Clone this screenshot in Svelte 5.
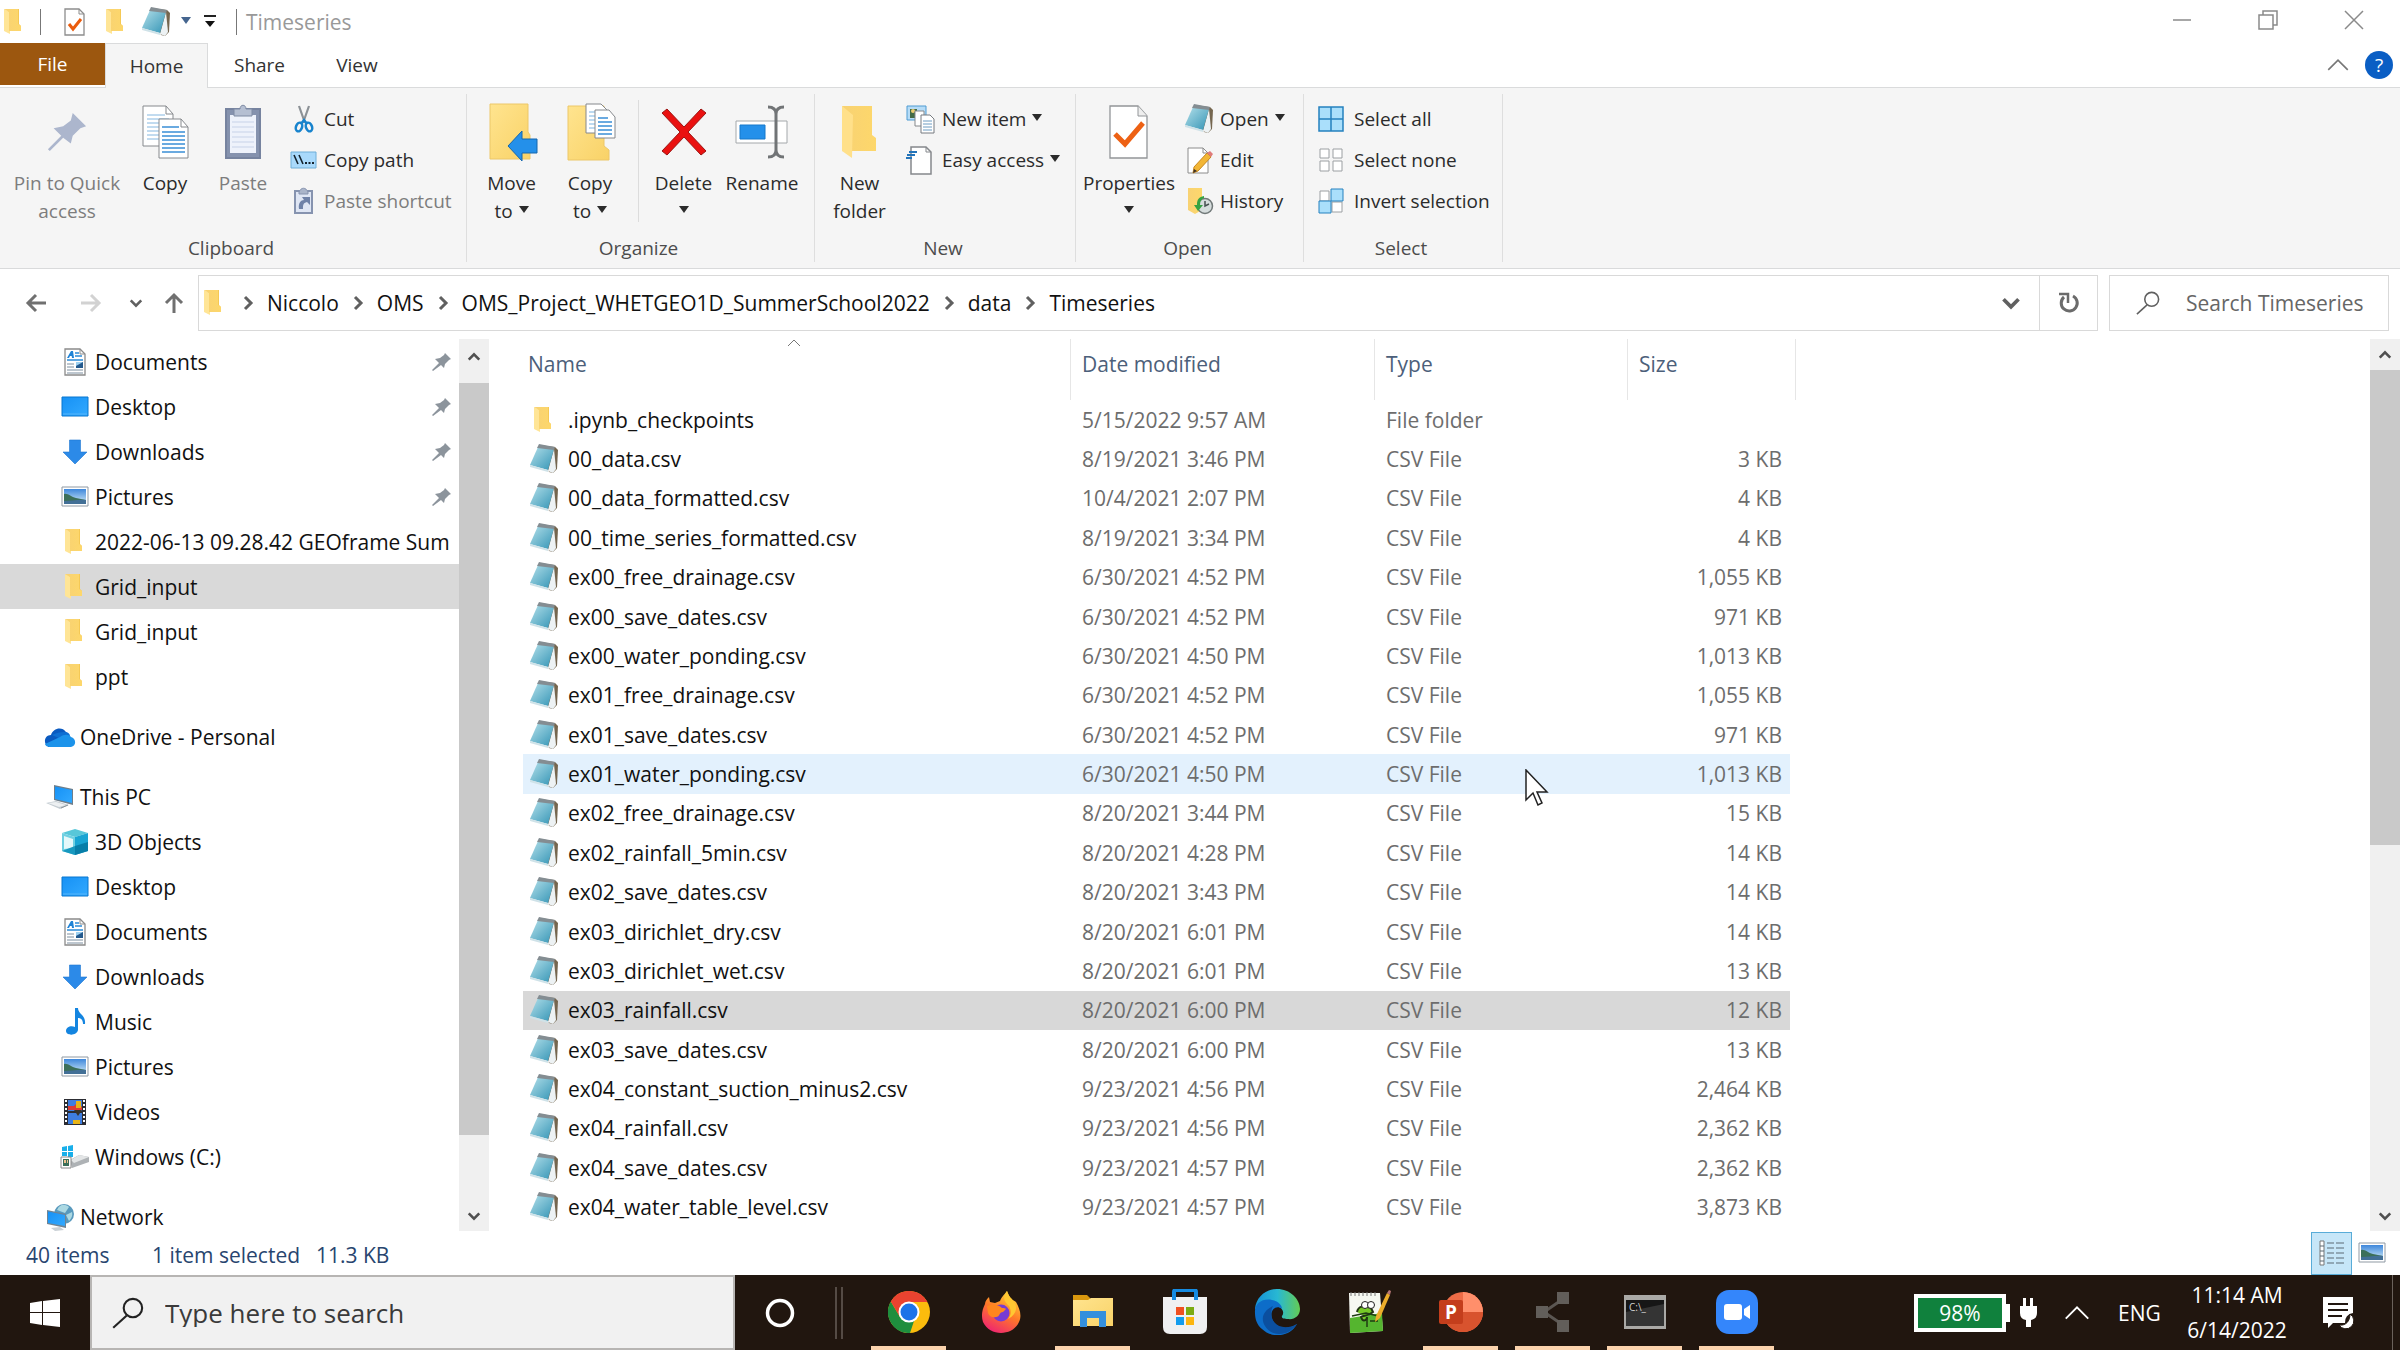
<script>
  const files = [
    ['.ipynb_checkpoints', '5/15/2022 9:57 AM', 'File folder', ''],
    ['00_data.csv', '8/19/2021 3:46 PM', 'CSV File', '3 KB'],
    ['00_data_formatted.csv', '10/4/2021 2:07 PM', 'CSV File', '4 KB'],
    ['00_time_series_formatted.csv', '8/19/2021 3:34 PM', 'CSV File', '4 KB'],
    ['ex00_free_drainage.csv', '6/30/2021 4:52 PM', 'CSV File', '1,055 KB'],
    ['ex00_save_dates.csv', '6/30/2021 4:52 PM', 'CSV File', '971 KB'],
    ['ex00_water_ponding.csv', '6/30/2021 4:50 PM', 'CSV File', '1,013 KB'],
    ['ex01_free_drainage.csv', '6/30/2021 4:52 PM', 'CSV File', '1,055 KB'],
    ['ex01_save_dates.csv', '6/30/2021 4:52 PM', 'CSV File', '971 KB'],
    ['ex01_water_ponding.csv', '6/30/2021 4:50 PM', 'CSV File', '1,013 KB', 'hover'],
    ['ex02_free_drainage.csv', '8/20/2021 3:44 PM', 'CSV File', '15 KB'],
    ['ex02_rainfall_5min.csv', '8/20/2021 4:28 PM', 'CSV File', '14 KB'],
    ['ex02_save_dates.csv', '8/20/2021 3:43 PM', 'CSV File', '14 KB'],
    ['ex03_dirichlet_dry.csv', '8/20/2021 6:01 PM', 'CSV File', '14 KB'],
    ['ex03_dirichlet_wet.csv', '8/20/2021 6:01 PM', 'CSV File', '13 KB'],
    ['ex03_rainfall.csv', '8/20/2021 6:00 PM', 'CSV File', '12 KB', 'selected'],
    ['ex03_save_dates.csv', '8/20/2021 6:00 PM', 'CSV File', '13 KB'],
    ['ex04_constant_suction_minus2.csv', '9/23/2021 4:56 PM', 'CSV File', '2,464 KB'],
    ['ex04_rainfall.csv', '9/23/2021 4:56 PM', 'CSV File', '2,362 KB'],
    ['ex04_save_dates.csv', '9/23/2021 4:57 PM', 'CSV File', '2,362 KB'],
    ['ex04_water_table_level.csv', '9/23/2021 4:57 PM', 'CSV File', '3,873 KB']
  ];

  const tree = [
    { icon: 'documents', label: 'Documents', pinned: true },
    { icon: 'desktop', label: 'Desktop', pinned: true },
    { icon: 'download', label: 'Downloads', pinned: true },
    { icon: 'pictures', label: 'Pictures', pinned: true },
    { icon: 'folder', label: '2022-06-13 09.28.42 GEOframe Sum' },
    { icon: 'folder', label: 'Grid_input', current: true },
    { icon: 'folder', label: 'Grid_input' },
    { icon: 'folder', label: 'ppt' },
    { icon: 'onedrive', label: 'OneDrive - Personal', root: true },
    { icon: 'pc', label: 'This PC', root: true },
    { icon: 'cube', label: '3D Objects' },
    { icon: 'desktop', label: 'Desktop' },
    { icon: 'documents', label: 'Documents' },
    { icon: 'download', label: 'Downloads' },
    { icon: 'music', label: 'Music' },
    { icon: 'pictures', label: 'Pictures' },
    { icon: 'videos', label: 'Videos' },
    { icon: 'drive', label: 'Windows (C:)' },
    { icon: 'network', label: 'Network', root: true }
  ];

  const crumbs = ['Niccolo', 'OMS', 'OMS_Project_WHETGEO1D_SummerSchool2022', 'data', 'Timeseries'];

  const apps = [
    ['chrome', 'Chrome', true],
    ['firefox', 'Firefox', false],
    ['explorer', 'File Explorer', true],
    ['store', 'Microsoft Store', false],
    ['edge', 'Edge', false],
    ['notepadpp', 'Notepad++', false],
    ['powerpoint', 'PowerPoint', true],
    ['nodes', 'Share', true],
    ['terminal', 'Command Prompt', true],
    ['zoom', 'Zoom', true]
  ];
</script>

<svelte:head><title>Timeseries</title></svelte:head>

{#snippet icon(name)}
  {#if name === 'folder'}
    <svg width="30" height="30" viewBox="0 0 30 30"><path d="M9 2h11v15l2 2v5H9z" fill="#f5c955" /><path d="M5 2l6 3v22l-6-3z" fill="#ffe596" /><path d="M5 2h14v15l3 2v5H10V5z" fill="url(#gFolder)" /></svg>
  {:else if name === 'notepad'}
    <svg width="30" height="30" viewBox="0 0 30 30"><path d="M10 1l16 2 3 3-1 19-4 4-4-1z" fill="#75664f" /><path d="M25 5l2 20-3 4-5-2z" fill="#edf2f4" /><path d="M9 3l16 2-6 21L1 21z" fill="url(#gNote)" /><path d="M10 0l16 3-1 3L8 4z" fill="#848d92" /><path d="M1 21l18 5v2L1 23z" fill="#cfe2e8" /></svg>
  {:else if name === 'documents'}
    <svg width="30" height="30" viewBox="0 0 30 30"><path d="M5 2h15l5 5v21H5z" fill="#fff" stroke="#8b8b8b" stroke-width="1.3" /><path d="M20 2v5h5" fill="none" stroke="#8b8b8b" /><path d="M7 11l4-7h2l1 7h-2l-.3-2H10l-1 2z" fill="#1f83d6" /><path d="M15 6h4M15 9h7M7 13h16" stroke="#2b8ad6" stroke-width="1.5" /><path d="M7 17h7M7 20h7M7 23h16M7 26h16" stroke="#7d8fa0" stroke-width="1" /><path d="M16 15h7v6h-7z" fill="#245a8e" /><path d="M16 15h7l-7 4z" fill="#9dd0f0" /></svg>
  {:else if name === 'desktop'}
    <svg width="30" height="30" viewBox="0 0 30 30"><path d="M2 5h26v19H2z" fill="url(#gDesk)" stroke="#0877cf" /><path d="M3 22h24" stroke="#55b5fb" stroke-width="1" /></svg>
  {:else if name === 'download'}
    <svg width="30" height="30" viewBox="0 0 30 30"><path d="M9.500 3h11v12H27L15 27 3 15h6.500z" fill="#2c8ae8" stroke="#1e77d2" stroke-width=".6" /></svg>
  {:else if name === 'pictures'}
    <svg width="30" height="30" viewBox="0 0 30 30"><path d="M2 5h26v19H2z" fill="#fff" stroke="#8f99a3" /><path d="M4 7h22v15H4z" fill="url(#gSky)" /><path d="M4 12c4-1 7 3 12 4l10 2v4H4z" fill="#3c6f59" /><path d="M4 19c8 0 14-2 22-1v4H4z" fill="#426f96" /></svg>
  {:else if name === 'onedrive'}
    <svg width="32" height="30" viewBox="0 0 32 30"><path d="M3 24C-1 20 1 13 7 13 9 6 18 4 22 10l3 3-14 12H7c-2 0-3 0-4-1z" fill="#0a5ac0" /><path d="M21 10c3 0 5 2 5 4l-9 3-9-4c4-2 8-3 13-3z" fill="#0f6fd2" /><path d="M7 25c-2 0-5 0-6-3l15-7c4-3 9-3 11 0 5 1 6 9 0 10z" fill="#1c93ea" /></svg>
  {:else if name === 'pc'}
    <svg width="30" height="30" viewBox="0 0 30 30"><path d="M9 3l19 4v16L9 18z" fill="#6e7e8b" /><path d="M10 4.500l17 3.500v13l-17-4z" fill="url(#gDesk)" /><path d="M1 21l10-2 13 4-9 4z" fill="#c4ccd2" /><path d="M3 21l8-1 10 3-7 2z" fill="#edf0f2" /><path d="M16 26l7-3" stroke="#8b949b" /></svg>
  {:else if name === 'cube'}
    <svg width="30" height="30" viewBox="0 0 30 30"><path d="M15 2l13 4-13 4L2 6z" fill="#58c7d9" /><path d="M2 6l13 4v18L2 24z" fill="#6fd0e2" /><path d="M15 10l13-4v18l-13 4z" fill="#1aa5d3" /><path d="M4 9l9 3v9l-9 1z" fill="#e5f8fa" /><path d="M2 24l13-5v9z" fill="#1898bf" /><path d="M15 19l13-4v9l-13 4z" fill="#087ea8" /></svg>
  {:else if name === 'music'}
    <svg width="30" height="30" viewBox="0 0 30 30"><path d="M15 1h3c0 6 8 7 7 16h-2c0-4-2-6-5-6v12c-1 6-12 6-12 1 0-4 5-6 9-4z" fill="#1485e0" /></svg>
  {:else if name === 'videos'}
    <svg width="30" height="30" viewBox="0 0 30 30"><path d="M4 2h22v26H4z" fill="#2c2d33" /><path d="M8 3h14v11H8zM8 16h14v11H8z" fill="#3e7de0" /><path d="M6 3v24M24 3v24" stroke="#fff" stroke-width="2" stroke-dasharray="2 2" /><path d="M8 9h6l4-4 4 5v3H8z" fill="#dc3b35" /><path d="M16 4h5v7h-5zM13 23h7v4h-7z" fill="#e8b416" /><path d="M14 13h8l-4 6z" fill="#37332a" /></svg>
  {:else if name === 'drive'}
    <svg width="30" height="30" viewBox="0 0 30 30"><path d="M2 5l5-1v5H2zM8 4l5-1v6H8zM2 10h5v4H2zM8 10h5v5H8z" fill="#19afea" /><path d="M10 18l9-5 10 2v5l-17 6z" fill="#aeb2b5" /><path d="M11 18l8-5 10 2-15 6z" fill="#e3e5e6" /><path d="M1 15h10v11H1z" fill="#fff" stroke="#8a8a8a" /><path d="M3 17h6v7H3z" fill="#3b6e58" /><path d="M4 18h2v3H4zM7 18h1v3H7z" fill="#edc08d" /></svg>
  {:else if name === 'network'}
    <svg width="30" height="30" viewBox="0 0 30 30"><circle cx="19" cy="12" r="10" fill="#5899bd" /><path d="M12 8c3-7 9-6 12-3l-4 6zM21 13l6-3c1 4-1 7-3 9z" fill="#abd8e2" /><path d="M2 8l19 4v14L2 22z" fill="#6f8494" /><path d="M3 9.500L20 13v11L3 21z" fill="url(#gDesk)" /><path d="M6 26l9-1 4 3-9 1z" fill="#c9d0d5" /></svg>
  {:else if name === 'pageCheck'}
    <svg width="30" height="30" viewBox="0 0 30 30"><path d="M5 2h14l5 5v21H5z" fill="#fff" stroke="#8d8d8d" stroke-width="1.3" /><path d="M19 2v5h5" fill="none" stroke="#8d8d8d" /><path d="M9 17l4 5 8-10" fill="none" stroke="#ea5b0c" stroke-width="3" /></svg>
  {:else if name === 'pin'}
    <svg width="22" height="22" viewBox="0 0 22 22"><path d="M14 2l6 6-2 1-4 4-1 4-3-3-8 6-1-1 7-7-4-4 5-1 4-3z" fill="#8c949c" /></svg>
  {:else if name === 'bigPin'}
    <svg width="42" height="42" viewBox="0 0 22 22"><path d="M14 1l7 7-3 1-4 4-1 4-4-3-7 7-1-1 7-7-4-4 5-1 4-3z" fill="#acb6cd" /></svg>
  {:else if name === 'bigCopy'}
    <svg width="50" height="56" viewBox="0 0 50 56"><path d="M3 2h23l7 8v32H3z" fill="#fff" stroke="#86898d" /><path d="M26 2v8h7" fill="none" stroke="#86898d" /><path d="M7 11h18M7 15h22M7 19h22M7 23h22M7 27h22M7 31h22M7 35h22" stroke="#84b7e0" /><path d="M19 15h22l7 8v31H19z" fill="#fff" stroke="#86898d" /><path d="M41 15v8h7" fill="none" stroke="#86898d" /><path d="M22 23h17M22 28h23M22 32h23M22 36h23M22 40h23M22 44h23M22 48h23" stroke="#3a8fd6" stroke-width="1.500" /></svg>
  {:else if name === 'bigPaste'}
    <svg width="42" height="56" viewBox="0 0 42 56"><path d="M4 5h34v49H4z" fill="#8592ae" stroke="#76839f" stroke-width="2" /><path d="M8 11h26v38H8z" fill="#eef2fb" /><path d="M10 18h22M10 23h22M10 28h22M10 33h22M10 38h22M10 43h22" stroke="#c7d2e8" /><path d="M12 5h6c0-5 6-5 6 0h6v7H12z" fill="#b5bfd2" stroke="#7f8ba4" /></svg>
  {:else if name === 'cut'}
    <svg width="28" height="28" viewBox="0 0 28 28"><path d="M9 1l6 17M19 1l-6 17" stroke="#8c9196" stroke-width="2.200" /><ellipse cx="9" cy="22" rx="3" ry="4.500" fill="none" stroke="#1783cd" stroke-width="2.500" transform="rotate(20 9 22)" /><ellipse cx="19" cy="22" rx="3" ry="4.500" fill="none" stroke="#1783cd" stroke-width="2.500" transform="rotate(-20 19 22)" /><path d="M11 19l3-4 3 4" fill="none" stroke="#1783cd" stroke-width="2.500" /></svg>
  {:else if name === 'path'}
    <svg width="28" height="28" viewBox="0 0 28 28"><path d="M1 6h25v16H1z" fill="#a9d9fb" stroke="#6faed8" /><path d="M4 9l4 9M9 9l4 9" stroke="#15232e" stroke-width="1.600" /><path d="M15 17h2M18.500 17h2M22 17h2" stroke="#15232e" stroke-width="2" /></svg>
  {:else if name === 'shortcut'}
    <svg width="28" height="28" viewBox="0 0 28 28"><path d="M5 4h17v22H5z" fill="#dfe6f4" stroke="#8693af" stroke-width="2" /><path d="M9 5c2-5 7-5 9 0v2H9z" fill="#aab5ca" stroke="#8693af" /><path d="M9 22c-1-6 2-9 5-9l-2-3h8v8l-3-3c-4 1-4 3-4 7z" fill="#6f82a8" /></svg>
  {:else if name === 'move'}
    <svg width="52" height="58" viewBox="0 0 52 58"><path d="M4 1h38v28l2 3v24H4z" fill="url(#gYellow)" stroke="#ecc768" /><path d="M22 43l14-15v8h15v14H36v8z" fill="#2490ea" stroke="#1467ad" /></svg>
  {:else if name === 'copyTo'}
    <svg width="52" height="58" viewBox="0 0 52 58"><path d="M4 3h36v40l5 4v10H4z" fill="url(#gYellow)" stroke="#ecc768" /><path d="M22 1h15l6 6v23H22z" fill="#fff" stroke="#85888c" /><path d="M25 9h13M25 13h15M25 17h15M25 21h15M25 25h15" stroke="#7ab3e0" /><path d="M31 7h14l6 7v21H31z" fill="#fff" stroke="#85888c" /><path d="M34 15h10M34 19h14M34 23h14M34 27h14M34 31h14" stroke="#3a8fd6" stroke-width="1.300" /></svg>
  {:else if name === 'delete'}
    <svg width="50" height="50" viewBox="0 0 50 50"><path d="M3 6l5-4 17 18L42 2l5 4-18 19 18 19-5 4-17-18L8 48l-5-4 18-19z" fill="#ea1110" stroke="#9c1513" /></svg>
  {:else if name === 'rename'}
    <svg width="54" height="54" viewBox="0 0 54 54"><path d="M1 16h51v22H1z" fill="#fff" stroke="#a4a8ab" /><path d="M5 20h25v14H5z" fill="#2490ea" stroke="#1678ca" /><path d="M33 2c6 0 8 3 8 7 0-4 2-7 8-7M41 8v38M33 52c6 0 8-3 8-7 0 4 2 7 8 7" fill="none" stroke="#717476" stroke-width="3" /></svg>
  {:else if name === 'bigFolder'}
    <svg width="44" height="56" viewBox="0 0 44 56"><path d="M4 2h30v29l4 3v13H12z" fill="url(#gFolder)" /><path d="M4 2l11 9-1 43-10-7z" fill="#ffe08a" /></svg>
  {:else if name === 'newItem'}
    <svg width="30" height="30" viewBox="0 0 30 30"><path d="M1 2h19v14H1z" fill="#b6dcf7" stroke="#4f9bd2" /><path d="M4 5h7v9H4z" fill="#446b47" /><circle cx="7" cy="7" r="2" fill="#edce72" /><path d="M9 7h9v15H9z" fill="#fff" stroke="#85888b" /><path d="M15 11h9l4 4v14H15z" fill="#fff" stroke="#777b80" /><path d="M17 17h9M17 20h9M17 23h9M17 26h9" stroke="#6d9cc2" /></svg>
  {:else if name === 'easy'}
    <svg width="30" height="30" viewBox="0 0 30 30"><path d="M5 2h15l5 5v22H5z" fill="#fff" stroke="#85888c" stroke-width="1.500" /><path d="M20 2v5h5" fill="none" stroke="#85888c" /><path d="M3 7h8M1 10h8M0 13h6" stroke="#2374b9" stroke-width="2" /></svg>
  {:else if name === 'bigCheck'}
    <svg width="42" height="56" viewBox="0 0 42 56"><path d="M2 2h28l9 10v42H2z" fill="#fff" stroke="#929598" stroke-width="1.300" /><path d="M30 2v10h9" fill="#eee" stroke="#929598" /><path d="M7 30l10 10 18-21" fill="none" stroke="#ed6114" stroke-width="5" /></svg>
  {:else if name === 'edit'}
    <svg width="30" height="30" viewBox="0 0 30 30"><path d="M4 3h15l5 5v20H4z" fill="#fff" stroke="#8c8c8c" /><path d="M19 3v5h5" fill="none" stroke="#8c8c8c" /><path d="M23 8l4 4-13 14-5 2 1-6z" fill="#f2b636" stroke="#c78820" /><path d="M23 8l3-2 3 3-2 3z" fill="#df7b7a" /><path d="M9 28l1-4 3 2z" fill="#3b3128" /></svg>
  {:else if name === 'history'}
    <svg width="30" height="30" viewBox="0 0 30 30"><path d="M4 2h14v22l-7 4-7-4z" fill="url(#gFolder)" /><circle cx="21" cy="20" r="7.500" fill="#d6dddd" stroke="#707878" stroke-width="1.500" /><path d="M21 15v5l4-2" stroke="#475052" fill="none" stroke-width="1.500" /><path d="M20 12c-3 1-4 4-4 7h3l-5 6-4-6h3c0-6 2-8 7-9z" fill="#35a343" /></svg>
  {:else if name === 'all'}
    <svg width="26" height="26" viewBox="0 0 26 26"><path d="M1 1h24v24H1zM13 1v24M1 13h24" fill="#aadffb" stroke="#2581bf" stroke-width="1.500" /></svg>
  {:else if name === 'none'}
    <svg width="26" height="26" viewBox="0 0 26 26"><path d="M2 2h9v9H2zM15 2h9v9h-9zM2 14h9v10H2zM15 14h9v10h-9z" fill="#fff" stroke="#9b9fa2" /></svg>
  {:else if name === 'invert'}
    <svg width="26" height="26" viewBox="0 0 26 26"><path d="M2 3h9v10H2zM14 14h10v10H14z" fill="#fff" stroke="#9b9fa2" /><path d="M13 1h12v12H13zM1 13h12v12H1z" fill="#aadffb" stroke="#2581bf" /></svg>
  {:else if name === 'chrome'}
    <svg width="42" height="42" viewBox="0 0 42 42"><circle cx="21" cy="21" r="21" fill="#fbbc0d" /><path d="M2.800 10.500L12 26l14 4-4 12A21 21 0 0 1 2.800 10.500z" fill="#1e8e3e" /><path d="M2.800 10.500A21 21 0 0 1 39.500 11H21L12 26z" fill="#ea4330" /><circle cx="21" cy="21" r="10.500" fill="#fff" /><circle cx="21" cy="21" r="8.500" fill="#1c73e8" /></svg>
  {:else if name === 'firefox'}
    <svg width="42" height="42" viewBox="0 0 42 42"><path d="M5 13c0-3 2-5 4-7l1 5 5 1 5-2c2-5 5-7 7-10l4 9c3 0 5 2 5 2 4 7 6 14 3 20-6 14-29 15-36 0-2-6-1-12 2-18z" fill="url(#gFire)" /><path d="M27 0c-5 6-3 10 2 15 2 4 3 8-1 13 10-5 10-14 4-20-2-2-4-4-5-8z" fill="#ffc832" /><circle cx="21" cy="22" r="8.500" fill="#763bd3" /><path d="M7 15c5-2 11-2 15 2 2 0 3 0 4 1l-3 3c-4 0-3 5-7 5-4 1-7-1-8-4z" fill="#ff861f" /></svg>
  {:else if name === 'explorer'}
    <svg width="42" height="42" viewBox="0 0 42 42"><path d="M1 4h14l4 4-3 6H1z" fill="#d9970e" /><path d="M1 9h15l3-2h22v28H1z" fill="url(#gYellow)" /><path d="M8 20h26v16h-7v-9H15v9H8z" fill="#338fdd" /></svg>
  {:else if name === 'store'}
    <svg width="46" height="46" viewBox="0 0 46 46"><path d="M1 8h44v30q0 7-7 7H8q-7 0-7-7z" fill="#f0f0f1" /><path d="M12 11V3q0-2 2-2h18q2 0 2 2v8" fill="none" stroke="#168be1" stroke-width="4" /><path d="M14 18h8v8h-8z" fill="#f05021" /><path d="M24 18h8v8h-8z" fill="#7cab13" /><path d="M14 28h8v8h-8z" fill="#139cee" /><path d="M24 28h8v8h-8z" fill="#fcb50f" /></svg>
  {:else if name === 'edge'}
    <svg width="46" height="46" viewBox="0 0 46 46"><path d="M1 20C2 8 12 0 23 0c13 0 23 10 23 20 0 7-6 11-12 10-4 0-7-1-6-3 3-4 0-9-6-10z" fill="url(#gEdge)" /><path d="M1 24C0 15 8 9 18 11c6 1 10 5 10 9-6-5-14 2-9 12 5 8 15 9 24 3C35 49 17 49 8 40c-5-4-7-10-7-16z" fill="#0d6dc9" /><path d="M19 17c-9 4-13 12-8 20 3 5 8 8 14 8 8 0 14-4 18-10-9 5-18 4-23-2-4-6-3-12-1-16z" fill="#0b4f9f" /></svg>
  {:else if name === 'notepadpp'}
    <svg width="44" height="44" viewBox="0 0 44 44"><path d="M2 3h31l3 38-33 2z" fill="#f6f8f2" /><path d="M3 28l32-5 1 18-33 2z" fill="#55b52f" /><path d="M4 2v4M8 2v4M12 2v4M16 2v4M20 2v4M24 2v4M28 2v4" stroke="#777" /><path d="M10 22c1-6 7-7 14-4l2 4c-6 5-9 3-12 5 2 6 6 3 6 0" fill="#76c928" stroke="#203513" stroke-width="2" /><circle cx="18" cy="15" r="3.500" fill="#fff" stroke="#222" /><circle cx="24" cy="15" r="3.500" fill="#fff" stroke="#222" /><path d="M5 26l14-3 12 3M20 28v9M23 31h8" stroke="#1f3d13" fill="none" stroke-width="1.500" /><path d="M40 3l3 2-10 23-5 4 1-6z" fill="#ecad2b" /><path d="M40 3l2-3 2 1-1 4z" fill="#b87777" /></svg>
  {:else if name === 'powerpoint'}
    <svg width="46" height="42" viewBox="0 0 46 42"><circle cx="25" cy="21" r="20" fill="#ed6c47" /><path d="M25 1a20 20 0 0 1 20 20H25z" fill="#ff8f6b" /><path d="M5 21h40a20 20 0 0 1-40 0z" fill="#d8532e" /><rect x="1" y="9" width="24" height="24" rx="2" fill="#c43e1c" /><text x="13" y="28" text-anchor="middle" font-size="19" font-weight="700" fill="#fff">P</text></svg>
  {:else if name === 'nodes'}
    <svg width="42" height="42" viewBox="0 0 42 42"><path d="M31 8L12 21l19 13" fill="none" stroke="#5b5652" stroke-width="3" /><path d="M25 1h12v12H25zM4 15h12v12H4zM25 29h12v12H25z" fill="#625e5a" /></svg>
  {:else if name === 'terminal'}
    <svg width="44" height="36" viewBox="0 0 44 36"><path d="M1 1h42v34H1z" fill="#aaa9a6" /><path d="M3 6h38v26H3z" fill="#161616" /><path d="M3 18L41 10v22H3z" fill="#343434" /><text x="6" y="17" font-size="10" fill="#d0d0d0">C:\_</text></svg>
  {:else if name === 'zoom'}
    <svg width="42" height="44" viewBox="0 0 42 44"><rect width="42" height="44" rx="13" fill="#3486fb" /><rect x="8" y="14" width="18" height="16" rx="3" fill="#fff" /><path d="M28 19l6-4v14l-6-4z" fill="#fff" /></svg>
  {/if}
{/snippet}

{#snippet chevron(dir, size, weight)}
  <svg class="chev {dir}" width={size} height={size} viewBox="0 0 16 16"><path d="M2 5l6 6 6-6" fill="none" stroke="currentColor" stroke-width={weight} /></svg>
{/snippet}

{#snippet caret()}<svg class="caret" width="10" height="8" viewBox="0 0 10 8"><path d="M0 0h10L5 7z" fill="currentColor" /></svg>{/snippet}

{#snippet lens(size)}
  <svg width={size} height={size} viewBox="0 0 26 26"><circle cx="17" cy="9" r="7.500" fill="none" stroke="currentColor" stroke-width="1.700" /><path d="M12 15L1 25" stroke="currentColor" stroke-width="1.700" /></svg>
{/snippet}

{#snippet big(name, first, second, menu, cls)}
  <button class="big {cls}"><span class="pic">{@render icon(name)}</span><span>{first}</span>{#if second || menu}<span class="second">{second}{#if menu}{@render caret()}{/if}</span>{/if}</button>
{/snippet}

{#snippet small(name, label, menu, cls)}
  <button class="small {cls}"><span class="tiny">{@render icon(name)}</span>{label}{#if menu}{@render caret()}{/if}</button>
{/snippet}

{#snippet scrollbar(cls)}
  <div class="scroll {cls}">
    <button aria-label="Scroll up">{@render chevron('up', 14, 3)}</button>
    <div class="thumb"></div>
    <div class="track"></div>
    <button aria-label="Scroll down">{@render chevron('down', 14, 3)}</button>
  </div>
{/snippet}

<svg class="defs" width="0" height="0" aria-hidden="true">
  <defs>
    <linearGradient id="gFolder"><stop offset="0" stop-color="#f8d273" /><stop offset="1" stop-color="#fdd76b" /></linearGradient>
    <linearGradient id="gYellow" x2="1" y2="1"><stop offset="0" stop-color="#ffe48f" /><stop offset="1" stop-color="#f9d267" /></linearGradient>
    <linearGradient id="gNote" x2="1" y2="1"><stop offset="0" stop-color="#b4e0ea" /><stop offset="1" stop-color="#3394b5" /></linearGradient>
    <linearGradient id="gDesk" x2="1" y2="1"><stop offset="0" stop-color="#1691f5" /><stop offset="1" stop-color="#32a9ff" /></linearGradient>
    <linearGradient id="gSky" x2="0" y2="1"><stop offset="0" stop-color="#3e87db" /><stop offset="1" stop-color="#d6eef9" /></linearGradient>
    <linearGradient id="gFire" x1=".8" y1="0" x2=".3" y2="1"><stop offset="0" stop-color="#ffdf39" /><stop offset=".5" stop-color="#ff7a28" /><stop offset="1" stop-color="#ef2570" /></linearGradient>
    <linearGradient id="gEdge"><stop offset="0" stop-color="#1590d6" /><stop offset=".5" stop-color="#28b8d3" /><stop offset="1" stop-color="#64cc54" /></linearGradient>
  </defs>
</svg>

<div class="desktop">
  <header>
    <div class="title">
      <div class="quick">
        <span>{@render icon('folder')}</span><i></i>
        <button aria-label="Properties">{@render icon('pageCheck')}</button>
        <button aria-label="New folder">{@render icon('folder')}</button>
        <button aria-label="Open">{@render icon('notepad')}</button>
        <button class="blue" aria-label="Open options">{@render caret()}</button>
        <button aria-label="Customize toolbar"><svg width="12" height="14" viewBox="0 0 12 14"><path d="M0 1h12" stroke="#222" stroke-width="2" /><path d="M1 6h10l-5 6z" fill="#111" /></svg></button>
        <i></i>
      </div>
      <span class="name">Timeseries</span>
      <div class="controls">
        <button aria-label="Minimize"><svg width="20" height="20"><path d="M1 10h18" stroke="currentColor" stroke-width="1.500" /></svg></button>
        <button aria-label="Restore"><svg width="20" height="20"><path d="M1 5h14v14H1zM5 5V1h14v14h-4" fill="none" stroke="currentColor" stroke-width="1.500" /></svg></button>
        <button aria-label="Close"><svg width="20" height="20"><path d="M1 1l18 18M19 1L1 19" stroke="currentColor" stroke-width="1.500" /></svg></button>
      </div>
    </div>
    <nav class="tabs">
      <button class="file">File</button>
      <button class="home">Home</button>
      <button>Share</button>
      <button class="view">View</button>
      <button class="fold" aria-label="Collapse ribbon">{@render chevron('up', 26, 1)}</button>
      <button class="help" aria-label="Help">?</button>
    </nav>
  </header>

  <section class="ribbon">
    <div class="group">
      <div class="tools">
        {@render big('bigPin', 'Pin to Quick', 'access', false, 'w133 dim')}
        {@render big('bigCopy', 'Copy', '', false, 'w62')}
        {@render big('bigPaste', 'Paste', '', false, 'w96 dim')}
        <div class="stack clip">
          {@render small('cut', 'Cut', false, '')}
          {@render small('path', 'Copy path', false, '')}
          {@render small('shortcut', 'Paste shortcut', false, 'dim')}
        </div>
      </div>
      <h2>Clipboard</h2>
    </div>
    <div class="group">
      <div class="tools">
        {@render big('move', 'Move', 'to', true, 'w88')}
        {@render big('copyTo', 'Copy', 'to', true, 'w68')}
        <i class="rule"></i>
        {@render big('delete', 'Delete', '', true, 'w88')}
        {@render big('rename', 'Rename', '', false, 'w68')}
        <i class="end"></i>
      </div>
      <h2>Organize</h2>
    </div>
    <div class="group">
      <div class="tools">
        {@render big('bigFolder', 'New', 'folder', false, 'w88')}
        <div class="stack new">
          {@render small('newItem', 'New item', true, '')}
          {@render small('easy', 'Easy access', true, '')}
        </div>
      </div>
      <h2>New</h2>
    </div>
    <div class="group">
      <div class="tools">
        {@render big('bigCheck', 'Properties', '', true, 'w106')}
        <div class="stack open">
          {@render small('notepad', 'Open', true, '')}
          {@render small('edit', 'Edit', false, '')}
          {@render small('history', 'History', false, '')}
        </div>
      </div>
      <h2>Open</h2>
    </div>
    <div class="group">
      <div class="tools">
        <div class="stack select">
          {@render small('all', 'Select all', false, '')}
          {@render small('none', 'Select none', false, '')}
          {@render small('invert', 'Invert selection', false, '')}
        </div>
      </div>
      <h2>Select</h2>
    </div>
  </section>

  <div class="bar">
    <button class="w56" aria-label="Back"><svg width="22" height="20" viewBox="0 0 22 20"><path d="M21 10H3M11 2l-8 8 8 8" fill="none" stroke="#707070" stroke-width="3" /></svg></button>
    <button class="w54" aria-label="Forward"><svg width="22" height="20" viewBox="0 0 22 20"><path d="M1 10h18M11 2l8 8-8 8" fill="none" stroke="#d2d2d2" stroke-width="3" /></svg></button>
    <button class="w36" aria-label="Recent">{@render chevron('down', 14, 3)}</button>
    <button class="w40" aria-label="Up"><svg width="20" height="22" viewBox="0 0 20 22"><path d="M10 21V3M2 11l8-8 8 8" fill="none" stroke="#707070" stroke-width="3" /></svg></button>
    <div class="address">
      <span class="place">{@render icon('folder')}</span>
      {#each crumbs as crumb}
        <span class="sep">{@render chevron('right', 16, 3)}</span><a href="#{crumb}">{crumb}</a>
      {/each}
      <button class="drop" aria-label="Previous locations">{@render chevron('down', 20, 3)}</button>
      <button class="refresh" aria-label="Refresh"><svg width="22" height="22" viewBox="0 0 22 22"><path d="M15 4a8 8 0 1 1-9 1" fill="none" stroke="#6b6b6b" stroke-width="3" /><path d="M1 2h9v9" fill="none" stroke="#6b6b6b" stroke-width="2.500" /></svg></button>
    </div>
    <label class="find">{@render lens(24)}<input type="search" aria-label="Search Timeseries" placeholder="Search Timeseries" /></label>
  </div>

  <main>
    <nav class="tree">
      {#each tree as item}
        <a href="#{item.label}" class:root={item.root} class:current={item.current}>
          <span class="glyph">{@render icon(item.icon)}</span><span class="text">{item.label}</span>
          {#if item.pinned}<span class="pinned">{@render icon('pin')}</span>{/if}
        </a>
      {/each}
    </nav>
    {@render scrollbar('left')}
    <div class="list">
      <table>
        <colgroup><col class="c1" /><col class="c2" /><col class="c3" /><col class="c4" /></colgroup>
        <thead>
          <tr>
            <th><span class="sort">{@render chevron('up', 16, 1)}</span>Name</th>
            <th>Date modified</th><th>Type</th><th>Size</th>
          </tr>
        </thead>
        <tbody>
          {#each files as [name, date, type, size, mark]}
            <tr class={mark}>
              <td><span class="entry"><span class="glyph">{@render icon(type === 'CSV File' ? 'notepad' : 'folder')}</span>{name}</span></td>
              <td>{date}</td>
              <td>{type}{#if mark === 'hover'}<svg class="cursor" width="26" height="38" viewBox="0 0 26 38"><path d="M2 1v30l7-7 5 12 4-2-5-11h10z" fill="#fff" stroke="#222" stroke-width="1.500" /></svg>{/if}</td>
              <td>{size}</td>
            </tr>
          {/each}
        </tbody>
      </table>
    </div>
    {@render scrollbar('right')}
  </main>

  <div class="status">
    <span class="count">40 items</span><span>1 item selected</span><span>11.3 KB</span>
    <button class="details" aria-label="Details view"><svg width="26" height="26" viewBox="0 0 26 26"><path d="M1 1h4v24H1z" fill="#fff" stroke="#777" /><path d="M1 6h4M1 11h4M1 16h4M1 21h4M8 3h7M17 3h8M8 8h7M17 8h8M8 13h7M17 13h8M8 18h7M17 18h8M8 23h7M17 23h8" stroke="#5c6b75" /></svg></button>
    <button class="thumbs" aria-label="Thumbnail view">{@render icon('pictures')}</button>
  </div>

  <footer>
    <button class="start" aria-label="Start"><svg width="30" height="28" viewBox="0 0 30 28"><path d="M0 4l12-2v11H0zM13 2l17-2v13H13zM0 14h12v12L0 24zM13 14h17v14l-17-2z" fill="#fff" /></svg></button>
    <label class="ask">{@render lens(32)}<input type="search" aria-label="Type here to search" placeholder="Type here to search" /></label>
    <button class="cortana" aria-label="Cortana"><svg width="30" height="30" viewBox="0 0 30 30"><circle cx="15" cy="15" r="12.500" fill="none" stroke="#fff" stroke-width="3.500" /></svg></button>
    <i class="grip"></i>
    <div class="apps">
      {#each apps as [name, label, running]}
        <button class:running aria-label={label}>{@render icon(name)}</button>
      {/each}
    </div>
    <div class="tray">
      <span class="battery">98%</span>
      <svg class="plug" width="18" height="30" viewBox="0 0 18 30"><path d="M4 0h3v8h4V0h3v8h4v7q0 6-6 7v7H7v-7q-6-1-6-7V8h3z" fill="#fff" /></svg>
      <button class="more" aria-label="Hidden icons">{@render chevron('up', 30, 1)}</button>
      <span class="lang">ENG</span>
      <time datetime="2022-06-14T11:14"><span>11:14 AM</span><span>6/14/2022</span></time>
      <button class="notes" aria-label="Notifications"><svg width="32" height="34" viewBox="0 0 32 34"><path d="M1 1h30v16a9 9 0 0 0-8 10H11l-5 5v-5H1z" fill="#fff" /><path d="M6 8h20M6 14h20M6 20h14" stroke="#21160f" stroke-width="2" /><path d="M28 18a8 8 0 1 1-11 11c7 1 11-4 11-11z" fill="#fff" stroke="#21160f" /></svg></button>
      <i class="peek"></i>
    </div>
  </footer>
</div>

<style>
  :global(body) { margin: 0; background: #fff; }
  .desktop { height: 100vh; display: flex; flex-direction: column; overflow: hidden; background: #fff; color: #111; font-family: 'Open Sans', 'Noto Sans', sans-serif; font-size: 21px; line-height: 28px; }
  .defs { position: absolute; }
  svg { flex: none; display: block; }
  button { border: 0; padding: 0; margin: 0; background: none; font: inherit; color: inherit; display: flex; align-items: center; justify-content: center; }
  input { border: 0; outline: 0; padding: 0; background: none; font: inherit; min-width: 0; flex: 1; }
  a { color: inherit; text-decoration: none; }
  .up { transform: rotate(180deg); }
  .right { transform: rotate(-90deg); }

  .title { display: flex; align-items: center; height: 43px; }
  .quick { display: grid; grid-template-columns: 28px 24px 46px 36px 44px 16px 32px 20px; height: 43px; align-items: center; justify-items: center; }
  .quick i { width: 1px; height: 26px; background: #777; }
  .blue { color: #45658f; }
  .name { flex: 1; color: #999; }
  .controls { display: flex; padding-right: 3px; color: #8a8a8a; }
  .controls button { width: 86px; height: 38px; margin-bottom: 4px; }
  .tabs { display: flex; height: 44px; font-size: 19px; align-items: stretch; border-bottom: 1px solid #dadbdc; color: #333; }
  .tabs button { width: 103px; }
  .tabs .file { width: 105px; background: #9c570f; color: #fff; margin-bottom: 2px; }
  .tabs .home { border: 1px solid #dadbdc; border-bottom: 0; background: #f5f5f5; margin-bottom: -1px; box-sizing: border-box; }
  .tabs .view { width: 92px; }
  .tabs .fold { margin-left: auto; width: 54px; color: #777; }
  .tabs .help { width: 28px; height: 28px; border-radius: 50%; background: #0a5ec4; color: #fff; align-self: center; margin-right: 7px; }

  .ribbon { display: flex; background: #f5f5f5; border-bottom: 1px solid #d9dadb; font-size: 19px; height: 180px; color: #2b2b2b; }
  .group { display: flex; flex-direction: column; justify-content: space-between; margin: 6px 0; border-right: 1px solid #dedede; }
  .tools { display: flex; }
  h2 { margin: 0; padding-right: 4px; font-size: 19px; line-height: 28px; font-weight: 400; text-align: center; color: #4c4c4c; }
  .big { flex-direction: column; justify-content: flex-start; white-space: nowrap; padding-top: 8px; }
  .pic { height: 60px; margin-bottom: 7px; display: flex; align-items: center; }
  .second { display: flex; align-items: center; gap: 6px; height: 28px; }
  .dim { color: #7d7d7d; }
  .caret { margin-bottom: 2px; }
  .w133 { width: 134px; }
  .w62 { width: 62px; }
  .w96 { width: 94px; }
  .w88 { width: 89px; }
  .w68 { width: 68px; }
  .w106 { width: 106px; }
  .rule { width: 1px; height: 122px; background: #dcdcdc; margin: 6px 0 0 14px; }
  .end { width: 18px; }
  .stack { display: flex; flex-direction: column; padding-top: 4px; }
  .small { height: 41px; justify-content: flex-start; gap: 6px; white-space: nowrap; }
  .tiny { width: 30px; display: flex; }
  .clip { width: 176px; }
  .clip .small { gap: 4px; }
  .new { width: 169px; padding-left: 2px; }
  .open { width: 119px; padding-left: 2px; }
  .select { width: 184px; padding-left: 14px; }

  .bar { display: flex; padding: 6px 11px 7px 8px; height: 56px; color: #606060; }
  .w56 { width: 56px; }
  .w54 { width: 54px; }
  .w36 { width: 36px; }
  .w40 { width: 40px; margin-right: 4px; }
  .address { flex: 1; display: flex; align-items: center; border: 1px solid #d9d9d9; }
  .address a { color: #111; }
  .place { width: 30px; display: flex; justify-content: center; }
  .sep { width: 38px; display: flex; justify-content: center; }
  .drop { margin-left: auto; width: 56px; align-self: stretch; }
  .refresh { width: 58px; align-self: stretch; border-left: 1px solid #d9d9d9; }
  .find { box-sizing: border-box; width: 280px; margin-left: 11px; border: 1px solid #d9d9d9; display: flex; align-items: center; padding-left: 26px; gap: 26px; }
  .find input::placeholder { color: #666; opacity: 1; }

  main { flex: 1; min-height: 0; display: flex; padding-top: 1px; }
  .tree { width: 459px; overflow: hidden; color: #111; }
  .tree a { display: flex; align-items: center; height: 45px; padding-left: 60px; }
  .tree a.root { margin-top: 15px; padding-left: 45px; }
  .tree .current { background: #d9d9d9; }
  .glyph { width: 30px; margin-right: 5px; display: flex; justify-content: center; }
  .text { flex: 1; white-space: nowrap; }
  .pinned { width: 28px; }
  .scroll { width: 30px; display: flex; flex-direction: column; background: #f0f0f0; color: #505050; }
  .scroll button { height: 31px; }
  .thumb { background: #c9c9c9; flex: 752; }
  .track { flex: 65; }
  .left button:first-child { height: 44px; padding-bottom: 8px; box-sizing: border-box; }
  .right .thumb { flex: 475; }
  .right .track { flex: 355; }
  .scroll.right { transform: none; }

  .list { flex: 1; padding-left: 34px; overflow: hidden; display: flex; }
  table { table-layout: fixed; width: 1273px; height: 888px; border-spacing: 0; color: #6d6d6d; }
  .c1 { width: 548px; }
  .c2 { width: 304px; }
  .c3 { width: 253px; }
  .c4 { width: 168px; }
  thead tr { height: 61px; }
  th { position: relative; font-weight: 400; text-align: left; vertical-align: top; color: #4c607a; padding: 0 0 0 11px; line-height: 50px; border-right: 1px solid #e6e6e6; }
  th:first-child { padding-left: 5px; }
  .sort { position: absolute; left: 48%; top: -4px; color: #777; }
  td { position: relative; padding: 0 0 0 11px; white-space: nowrap; }
  td:first-child { color: #111; padding-left: 6px; }
  td:last-child { text-align: right; padding-right: 8px; border-right: 6px solid transparent; background-clip: padding-box; }
  .entry { display: flex; align-items: center; }
  .entry .glyph { margin-right: 9px; }
  .hover td { background-color: #e3f1fd; }
  .selected td { background-color: #d8d8d8; }
  .cursor { position: absolute; left: 149px; top: 15px; z-index: 1; }

  .status { display: flex; align-items: center; height: 44px; padding: 0 12px 0 26px; gap: 16px; color: #28456f; }
  .status span { padding-top: 3px; }
  .count { width: 110px; }
  .details { width: 41px; height: 43px; box-sizing: border-box; margin-left: auto; background: #c6e6f8; border: 1px solid #58acd8; }
  .thumbs { width: 32px; margin-left: -12px; }

  footer { display: flex; height: 75px; background: #21160f; color: #fff; }
  .start { width: 90px; }
  .ask { box-sizing: border-box; width: 645px; border: 2px solid #b7b5b3; background: #f1f1f1; color: #222; display: flex; align-items: center; padding-left: 20px; gap: 21px; font-size: 26px; }
  .ask input::placeholder { color: #3a3a3a; opacity: 1; }
  .cortana { width: 90px; }
  .grip { align-self: center; width: 4px; height: 52px; border: solid #554b45; border-width: 0 2px; box-sizing: content-box; margin-left: 10px; }
  .apps { display: flex; gap: 17px; margin-left: 28px; }
  .apps button { width: 75px; border-bottom: 4px solid transparent; padding-top: 2px; }
  .apps .running { border-bottom-color: #fbd3ad; }
  .tray { display: flex; align-items: center; margin-left: auto; padding-right: 7px; }
  .battery { width: 84px; height: 30px; background: #10813d; border: 4px solid #fff; display: flex; align-items: center; justify-content: center; position: relative; }
  .battery::after { content: ''; position: absolute; right: -8px; top: 6px; width: 4px; height: 18px; background: #fff; }
  .plug { margin-left: 13px; }
  .more { width: 80px; }
  .lang { width: 68px; margin-left: 1px; }
  time { width: 102px; display: flex; flex-direction: column; align-items: center; line-height: 35px; }
  .notes { margin-left: 34px; }
  .peek { align-self: stretch; width: 1px; margin-left: 38px; background: #6b625c; }
</style>
